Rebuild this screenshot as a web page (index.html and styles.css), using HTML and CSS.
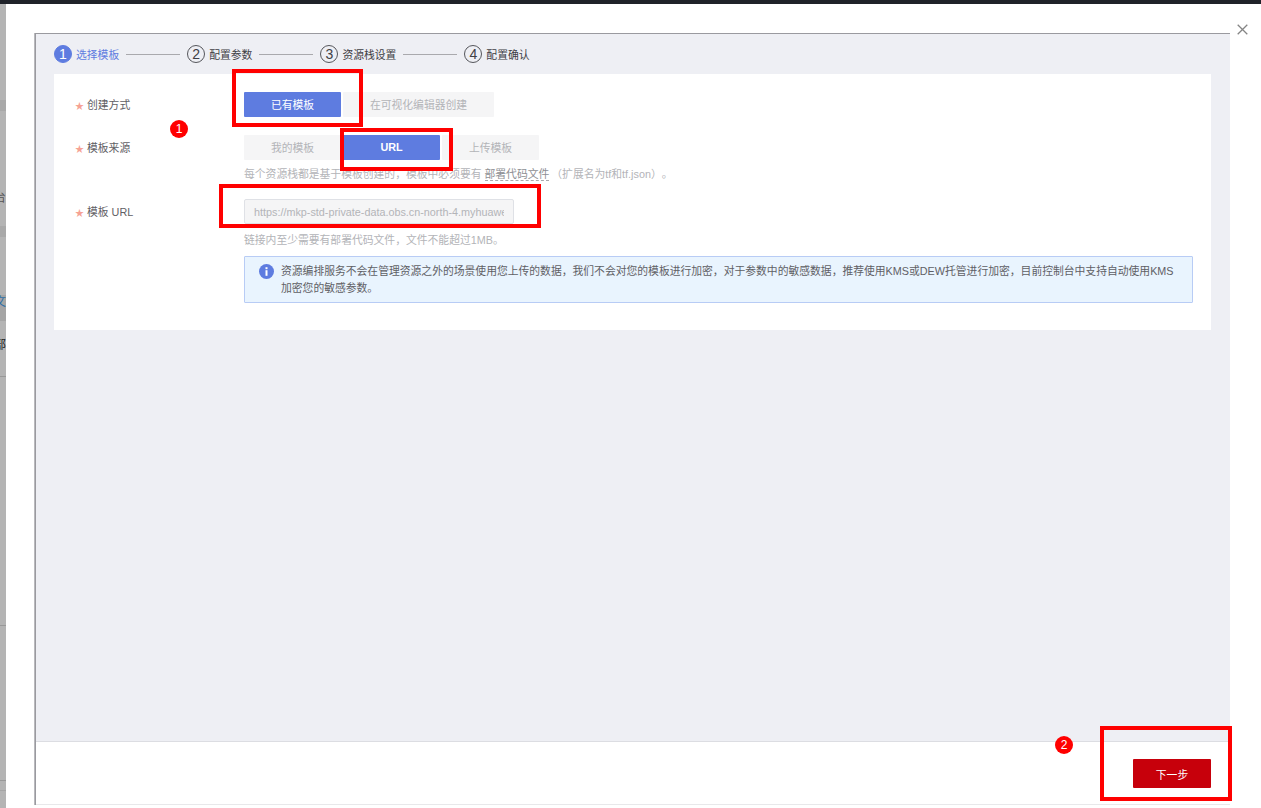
FILE: index.html
```html
<!DOCTYPE html>
<html lang="zh-CN">
<head>
<meta charset="utf-8">
<title>创建资源栈</title>
<link rel="stylesheet" href="styles.css">
</head>
<body>
<div class="page">
  <div class="topbar"></div>
  <div class="stage">
    <div class="sliver">
      <span class="frag frag-a">台</span>
      <span class="frag frag-b">文</span>
      <span class="frag frag-c">部</span>
    </div>
    <div class="modal">
      <button class="close" aria-label="关闭">
        <svg width="11" height="11" viewBox="0 0 11 11"><path d="M.7.7l9.6 9.6M10.3.7L.7 10.3" stroke="#858585" stroke-width="1.3" fill="none"/></svg>
      </button>
      <div class="frame">
        <div class="panel">
          <div class="steps">
            <span class="num num-on">1</span><span class="step-text step-on">选择模板</span><span class="line"></span>
            <span class="num">2</span><span class="step-text">配置参数</span><span class="line"></span>
            <span class="num">3</span><span class="step-text">资源栈设置</span><span class="line"></span>
            <span class="num">4</span><span class="step-text">配置确认</span>
          </div>
          <div class="card">
            <div class="row row-one">
              <div class="label"><span class="star">★</span>创建方式</div>
              <div class="seg">
                <span class="opt opt-on w97">已有模板</span>
                <span class="opt w151">在可视化编辑器创建</span>
              </div>
            </div>
            <div class="row row-two">
              <div class="label"><span class="star">★</span>模板来源</div>
              <div class="seg">
                <span class="opt w97">我的模板</span>
                <span class="opt opt-on w97 bold">URL</span>
                <span class="opt w97">上传模板</span>
              </div>
            </div>
            <div class="hint hint-one">每个资源栈都是基于模板创建的，模板中必须要有 <span class="dash">部署代码文件</span>（扩展名为tf和tf.json）。</div>
            <div class="row row-three">
              <div class="label"><span class="star">★</span>模板 URL</div>
              <input class="url" type="text" disabled value="https://mkp-std-private-data.obs.cn-north-4.myhuaweicloud.com/template.zip">
            </div>
            <div class="hint hint-two">链接内至少需要有部署代码文件，文件不能超过1MB。</div>
            <div class="notice">
              <svg class="info" width="15" height="15" viewBox="0 0 15 15"><circle cx="7.5" cy="7.5" r="7.5" fill="#5e7ce0"/><rect x="6.5" y="6.2" width="2" height="5.6" fill="#fff"/><rect x="6.5" y="3.2" width="2" height="2" fill="#fff"/></svg>
              <p>资源编排服务不会在管理资源之外的场景使用您上传的数据，我们不会对您的模板进行加密，对于参数中的敏感数据，推荐使用KMS或DEW托管进行加密，目前控制台中支持自动使用KMS加密您的敏感参数。</p>
            </div>
          </div>
        </div>
        <div class="footer">
          <button class="next">下一步</button>
        </div>
      </div>
    </div>
  </div>
  <div class="mark mark-a"></div>
  <div class="mark mark-b"></div>
  <div class="mark mark-c"></div>
  <div class="mark mark-d"></div>
  <span class="badge badge-a">1</span>
  <span class="badge badge-b">2</span>
</div>
</body>
</html>
```

FILE: styles.css
```css
* { box-sizing: border-box; }
html, body { margin: 0; padding: 0; }
body {
  font-family: "Liberation Sans", "Noto Sans CJK SC", sans-serif;
  font-size: 10.8px;
  color: #5f6065;
  background: #fff;
  text-spacing-trim: space-all;
}
.page {
  position: relative;
  width: 1261px;
  height: 808px;
  overflow: hidden;
  display: flex;
  flex-direction: column;
}
.topbar { height: 4px; background: #1f2229; flex: none; }
.stage { flex: 1; display: flex; min-height: 0; }

.sliver {
  position: relative;
  width: 6px;
  flex: none;
  overflow: hidden;
  background:
    linear-gradient(#a9a9a9, #a9a9a9) 0 96px / 100% 11px no-repeat,
    linear-gradient(#a9a9a9, #a9a9a9) 0 222px / 100% 11px no-repeat,
    linear-gradient(#a5a5a5, #a5a5a5) 0 291px / 100% 26px no-repeat,
    linear-gradient(#999, #999) 0 372px / 100% 1px no-repeat,
    linear-gradient(#999, #999) 0 621px / 100% 1px no-repeat,
    linear-gradient(#999, #999) 0 776px / 100% 1px no-repeat,
    linear-gradient(#a5a5a5, #a5a5a5) 0 786px / 100% 1px no-repeat,
    #b4b4b4;
}
.frag { position: absolute; right: 0; font-size: 12px; line-height: 14px; color: #555; }
.frag-a { top: 187px; }
.frag-b { top: 291px; color: #2f6ea5; }
.frag-c { top: 334px; color: #222; }

.modal {
  position: relative;
  flex: 1;
  min-width: 0;
  background: #fff;
  padding: 29px 31px 3px 29px;
  display: flex;
}
.close {
  position: absolute;
  top: 20px;
  right: 13px;
  width: 11px;
  height: 11px;
  padding: 0;
  border: 0;
  background: none;
  display: flex;
}
.frame {
  flex: 1;
  display: flex;
  flex-direction: column;
  border-top: 1px solid #9a9a9f;
  border-left: 1px solid #9a9a9f;
  box-shadow: -1px 0 0 #b9b9bd;
}
.panel {
  flex: 1;
  background: #eeeff4;
  padding: 0 19px 0 18px;
  min-height: 0;
}
.steps { height: 40px; display: flex; align-items: center; }
.num {
  width: 18px;
  height: 18px;
  border: 1px solid #55565b;
  border-radius: 50%;
  display: flex;
  align-items: center;
  justify-content: center;
  font-size: 14px;
  color: #3f4045;
  flex: none;
}
.num-on { background: #5e7ce0; border-color: #5e7ce0; color: #fff; }
.step-text { margin-left: 4px; color: #3f4045; white-space: nowrap; }
.step-on { color: #5e7ce0; }
.line { width: 54px; height: 1px; background: #a9a9ad; margin: 0 7px; flex: none; }

.card { height: 256px; background: #fff; padding-top: 18px; }
.row { display: flex; align-items: center; height: 25px; }
.row-two { margin-top: 18px; }
.row-three { margin-top: 17px; }
.label { width: 190px; padding: 0 0 2px 21px; flex: none; }
.star { color: #f6a294; font-size: 9px; width: 12px; display: inline-block; }
.seg { display: flex; }
.opt {
  height: 25px;
  display: flex;
  align-items: center;
  justify-content: center;
  background: #f5f5f6;
  color: #b3b4b8;
  border-radius: 1px;
  margin-right: 2px;
  padding-bottom: 2px;
}
.opt-on { background: #5e7ce0; color: #fff; }
.bold { font-weight: 700; }
.w97 { width: 97px; }
.w151 { width: 151px; }
.hint { margin-left: 190px; color: #b3b4b8; line-height: 16px; white-space: nowrap; }
.hint-one { margin-top: 6px; }
.hint-two { margin-top: 8px; }
.dash { color: #8e8f94; border-bottom: 1px dashed #a9a9ad; margin-right: 2px; }
.url {
  width: 270px;
  height: 25px;
  padding: 0 9px;
  border: 1px solid #dfe1e6;
  border-radius: 2px;
  background: #f5f5f6;
  color: #b3b4b8;
  font: 400 10.8px "Liberation Sans", "Noto Sans CJK SC", sans-serif;
}
.notice {
  margin: 8px 18px 0 190px;
  height: 47px;
  background: #e9f4fe;
  border: 1px solid #b8ccf5;
  border-radius: 1px;
  display: flex;
  padding: 6px 18px 0 14px;
}
.info { flex: none; margin: 1px 7px 0 0; }
.notice p { margin: 0; line-height: 17px; color: #5f6065; }

.footer {
  height: 64px;
  flex: none;
  background: #fff;
  border-top: 1px solid #dcdde2;
  border-bottom: 1px solid #e8e8ea;
  display: flex;
  justify-content: flex-end;
  align-items: flex-start;
  padding: 17px 19px 0 0;
}
.next {
  width: 78px;
  height: 29px;
  border: 0;
  border-radius: 1px;
  background: #c7000b;
  color: #fff;
  font: 10.8px "Liberation Sans", "Noto Sans CJK SC", sans-serif;
  padding: 0;
}

.mark { position: absolute; border: 4px solid #f00; }
.mark-a { left: 232px; top: 69px; width: 131px; height: 58px; }
.mark-b { left: 340px; top: 128px; width: 113px; height: 43px; }
.mark-c { left: 219px; top: 184px; width: 322px; height: 44px; }
.mark-d { left: 1100px; top: 726px; width: 132px; height: 75px; }
.badge {
  position: absolute;
  width: 18px;
  height: 18px;
  border-radius: 50%;
  background: #f00;
  color: #fff;
  font-size: 12px;
  line-height: 18px;
  text-align: center;
}
.badge-a { left: 170px; top: 120px; }
.badge-b { left: 1055px; top: 736px; }
```
